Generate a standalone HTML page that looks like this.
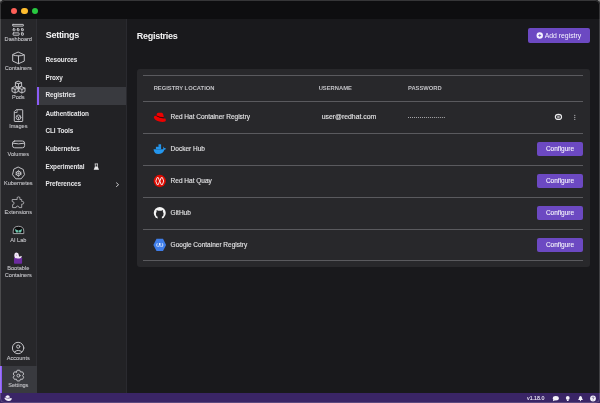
<!DOCTYPE html>
<html><head><meta charset="utf-8">
<style>
*{margin:0;padding:0;box-sizing:border-box}
html,body{width:600px;height:403px;overflow:hidden;background:#8c8c8c}
body{font-family:"Liberation Sans",sans-serif;position:relative;will-change:transform}
.win{position:absolute;left:0;top:0;width:600px;height:403px;border-radius:4.5px;background:#1a1a1d;overflow:hidden}
.frame{position:absolute;left:0;top:0;width:600px;height:403px;border-radius:4.5px;border:1px solid rgba(255,255,255,0.17);pointer-events:none}
.abs{position:absolute}
.title{left:0;top:0;width:600px;height:18.6px;background:#0e0e10}
.dot{position:absolute;width:6.4px;height:6.4px;border-radius:50%;top:7.7px}
.nav{left:0;top:18.6px;width:37px;height:375px;background:#27272a;border-right:1px solid #2f2f34}
.snav{left:37px;top:18.6px;width:90px;height:375px;background:#222225;border-right:1px solid #2a2a2f}
.main{left:127px;top:18.6px;width:472px;height:375px;background:#19191c}
.status{left:0;top:393.3px;width:600px;height:9.7px;background:#3a2566}
.lbl{position:absolute;left:0;width:36.6px;text-align:center;font-size:5.6px;color:#c4c4c8;-webkit-text-stroke:0.1px #c4c4c8;white-space:nowrap;line-height:1}
.ic{position:absolute}
.mi{position:absolute;left:45.5px;font-size:6.4px;font-weight:bold;color:#e6e6e8;white-space:nowrap;line-height:1;letter-spacing:-0.1px}
.card{left:137px;top:69px;width:452.5px;height:198px;background:#28282b;border-radius:3px}
.hl{position:absolute;left:6px;width:440px;height:1px;background:#5a5a5e}
.th{position:absolute;font-size:5.8px;font-weight:bold;color:#c2c2c6;line-height:1;white-space:nowrap}
.td{position:absolute;font-size:6.5px;color:#e4e4e6;line-height:1;white-space:nowrap;-webkit-text-stroke:0.12px #e4e4e6}
.btn{position:absolute;left:400px;width:46px;height:14.4px;background:#6c49c2;border-radius:2px;color:#f2f0fa;font-size:6.5px;text-align:center;line-height:14.4px;-webkit-text-stroke:0.12px #f2f0fa}
</style></head><body>
<div class="win">
  <div class="abs title">
    <div class="dot" style="left:10.8px;background:#fe5f57"></div>
    <div class="dot" style="left:21.3px;background:#febc2e"></div>
    <div class="dot" style="left:31.8px;background:#28c840"></div>
  </div>
  <div class="abs nav"></div>
  <div class="abs snav"></div>
  <div class="abs main"></div>
</div>
<!-- NAV LABELS -->
<div class="lbl" style="top:37px">Dashboard</div>
<div class="lbl" style="top:66px">Containers</div>
<div class="lbl" style="top:94.7px">Pods</div>
<div class="lbl" style="top:123.7px">Images</div>
<div class="lbl" style="top:152.4px">Volumes</div>
<div class="lbl" style="top:181.4px">Kubernetes</div>
<div class="lbl" style="top:209.8px">Extensions</div>
<div class="lbl" style="top:237.5px">AI Lab</div>
<div class="lbl" style="top:265.8px">Bootable</div>
<div class="lbl" style="top:273.3px">Containers</div>
<div class="lbl" style="top:355.6px">Accounts</div>
<div class="abs" style="left:0;top:365.8px;width:37px;height:27.5px;background:#393a3f"></div>
<div class="abs" style="left:0;top:365.8px;width:2px;height:27.8px;background:#8b5cf6"></div>
<div class="lbl" style="top:382.8px">Settings</div>

<!-- SETTINGS NAV -->
<div class="abs" style="left:45.8px;top:30.8px;font-size:9px;font-weight:bold;color:#f4f4f5;letter-spacing:-0.3px;line-height:1">Settings</div>
<div class="abs" style="left:37px;top:87px;width:89px;height:18px;background:#393a3f"></div>
<div class="abs" style="left:37px;top:87px;width:2px;height:18px;background:#8b5cf6"></div>
<div class="mi" style="top:57px">Resources</div>
<div class="mi" style="top:74.7px">Proxy</div>
<div class="mi" style="top:92.2px">Registries</div>
<div class="mi" style="top:110.5px">Authentication</div>
<div class="mi" style="top:128.2px">CLI Tools</div>
<div class="mi" style="top:145.9px">Kubernetes</div>
<div class="mi" style="top:163.5px">Experimental</div>
<div class="mi" style="top:181.4px">Preferences</div>

<!-- MAIN -->
<div class="abs" style="left:136.8px;top:31.5px;font-size:9px;font-weight:bold;color:#f4f4f5;letter-spacing:-0.28px;line-height:1">Registries</div>
<div class="abs" style="left:528px;top:28px;width:61.6px;height:15px;background:#6c49c2;border-radius:2px"></div>
<div class="abs" style="left:544.7px;top:32.6px;font-size:6.85px;color:#f5f3ff;line-height:1;white-space:nowrap">Add registry</div>

<div class="abs card">
  <div class="hl" style="top:5.6px"></div>
  <div class="hl" style="top:32px"></div>
  <div class="hl" style="top:63.9px"></div>
  <div class="hl" style="top:95.8px"></div>
  <div class="hl" style="top:127.6px"></div>
  <div class="hl" style="top:159.5px"></div>
  <div class="hl" style="top:191.3px"></div>
  <div class="th" style="left:16.7px;top:16.6px">REGISTRY LOCATION</div>
  <div class="th" style="left:181.7px;top:16.6px">USERNAME</div>
  <div class="th" style="left:271px;top:16.6px">PASSWORD</div>

  <div class="td" style="left:33.6px;top:45.4px">Red Hat Container Registry</div>
  <div class="td" style="left:184.7px;top:45.4px;font-size:6.85px">user@redhat.com</div>
  <div class="td" style="left:33.6px;top:77.4px">Docker Hub</div>
  <div class="td" style="left:33.6px;top:109.2px">Red Hat Quay</div>
  <div class="td" style="left:33.6px;top:141.0px">GitHub</div>
  <div class="td" style="left:33.6px;top:172.9px">Google Container Registry</div>

  <div class="btn" style="top:72.9px">Configure</div>
  <div class="btn" style="top:104.7px">Configure</div>
  <div class="btn" style="top:136.6px">Configure</div>
  <div class="btn" style="top:168.5px">Configure</div>
</div>

<div class="abs status"></div>
<div class="abs" style="left:527px;top:395.5px;font-size:5.3px;color:#eeeaf8;line-height:1;-webkit-text-stroke:0.1px #eeeaf8">v1.18.0</div>

<svg class="abs" style="left:0;top:0" width="600" height="403" viewBox="0 0 600 403">
<g fill="none" stroke="#c2c2c6" stroke-width="1" stroke-linejoin="round" stroke-linecap="round">
  <!-- dashboard -->
  <g stroke-width="0.95" stroke="#c8c8cc">
  <rect x="12.7" y="24.4" width="10.7" height="1.7" rx="0.3"/>
  <rect x="13.1" y="28.8" width="1.9" height="1.9" rx="0.3"/>
  <rect x="17.2" y="28.8" width="1.9" height="1.9" rx="0.3"/>
  <rect x="21.5" y="28.8" width="1.9" height="1.9" rx="0.3"/>
  <rect x="13.1" y="32.9" width="6" height="2.3" rx="0.3"/>
  <rect x="21.5" y="32.9" width="1.9" height="2.3" rx="0.3"/>
  </g>
  <!-- containers -->
  <path d="M18.5 52.2 L24.3 54.9 L24.3 61.1 L18.5 63.7 L12.7 61.1 L12.7 54.9 Z M12.9 54.9 Q15 55.8 18.5 55.9 Q22 55.8 24.1 54.9 M18.5 55.9 L18.5 63.5"/>
  <!-- pods -->
  <path d="M18.5 81.3 L21.6 82.7 L21.6 86 L18.5 87.4 L15.4 86 L15.4 82.7 Z M15.4 82.7 L18.5 83.8 L21.6 82.7 M18.5 83.8 L18.5 87.4"/>
  <path d="M15.1 86.8 L18.2 88.2 L18.2 91.5 L15.1 92.9 L12 91.5 L12 88.2 Z M12 88.2 L15.1 89.3 L18.2 88.2 M15.1 89.3 L15.1 92.9"/>
  <path d="M21.9 86.8 L25 88.2 L25 91.5 L21.9 92.9 L18.8 91.5 L18.8 88.2 Z M18.8 88.2 L21.9 89.3 L25 88.2 M21.9 89.3 L21.9 92.9"/>
  <!-- images -->
  <path d="M16.6 109.7 L22.3 109.7 Q22.7 109.7 22.7 110.1 L22.7 121.1 Q22.7 121.5 22.3 121.5 L14.7 121.5 Q14.3 121.5 14.3 121.1 L14.3 112 Z"/>
  <path d="M14.9 112.5 L17.1 112.5 L17.1 110.3" stroke-width="0.8"/>
  <circle cx="18.5" cy="117.4" r="2.4" stroke-width="0.9"/>
  <path d="M16.8 116.3 L18.5 117.4 L20.2 116.3 M18.5 117.4 L18.5 119.6" stroke-width="0.8"/>
  <!-- volumes -->
  <rect x="12.5" y="141" width="12.1" height="6.8" rx="2.2"/>
  <path d="M12.6 143.2 Q18.5 144.6 24.5 143.2"/>
  <!-- kubernetes -->
  <path d="M18.5 167.2 L23.3 169.5 L24.5 174.7 L21.2 178.8 L15.8 178.8 L12.5 174.7 L13.7 169.5 Z"/>
  <circle cx="18.5" cy="173.4" r="2.3"/>
  <path d="M18.5 170.2 L18.5 176.6 M15.6 172.2 L21.4 174.6 M21.4 172.2 L15.6 174.6" stroke-width="0.6"/>
  <!-- extensions -->
  <path stroke-width="0.7" stroke="#d4d4d8" d="M12.6 199.5 L17.2 199.5 L17.2 198.9 A1.45 1.45 0 1 1 19.9 198.9 L19.9 199.5 L21.7 199.5 L21.7 201.5 L22.5 201.5 A1.3 1.3 0 1 1 22.5 204.1 L21.7 204.1 L21.7 207.6 L19.1 207.6 A1.5 1.5 0 0 0 16.1 207.6 L12.6 207.6 L12.6 204.6 A1.5 1.5 0 0 0 12.6 201.6 Z"/>
  <!-- ai lab -->
  <path d="M13.2 233.2 L13.2 231.2 Q13.2 226.3 18.5 226.3 Q23.8 226.3 23.8 231.2 L23.8 233.2 Z" fill="#0b0b0c" stroke="#a8a8ac" stroke-width="0.95"/>
  <!-- accounts -->
  <circle cx="18.1" cy="348" r="5.7"/>
  <circle cx="18.2" cy="346.6" r="1.6"/>
  <path d="M14.6 351.9 Q18.2 348.6 21.8 351.9"/>
  <!-- settings gear -->
  <path d="M16.40 372.05 L17.21 370.24 L19.69 370.24 L20.50 372.05 L20.50 372.05 L22.47 371.85 L23.71 373.99 L22.55 375.60 L22.55 375.60 L23.71 377.21 L22.47 379.35 L20.50 379.15 L20.50 379.15 L19.69 380.96 L17.21 380.96 L16.40 379.15 L16.40 379.15 L14.43 379.35 L13.19 377.21 L14.35 375.60 L14.35 375.60 L13.19 373.99 L14.43 371.85 L16.40 372.05 Z"/>
  <circle cx="18.45" cy="375.6" r="1.5"/>
</g>
<!-- ai lab eyes -->
<path d="M14.7 228.9 L18.3 230.4 L18.3 232.4 L16 232.4 Z M22.3 228.9 L18.7 230.4 L18.7 232.4 L21 232.4 Z" fill="#6cc4ac"/>
<!-- bootable -->
<rect x="14" y="257.6" width="8.1" height="6.1" rx="0.7" fill="#6c2b9f"/>
<path d="M16.5 252.5 Q18.7 252.5 18.8 255 Q18.8 256.3 19.4 256.6 Q20.3 256.8 20.9 255.7 L21.9 256.4 Q21.3 258.4 19.3 258.6 Q17.6 258.7 16.6 258.3 Q14.3 258.2 14.3 255.4 Q14.3 252.5 16.5 252.5 Z" fill="#f0e6f6"/>
<circle cx="16.3" cy="255.1" r="0.45" fill="#6c2b9f"/>

<!-- flask -->
<path d="M94.7 163.9 L98 163.9 M95.3 163.9 L95.3 166.8 M97.4 163.9 L97.4 166.8" fill="none" stroke="#e8e8ea" stroke-width="0.75"/>
<path d="M95 166.4 L97.7 166.4 L99 169.8 L93.7 169.8 Z" fill="#ececee"/>
<!-- chevron -->
<path d="M116.2 182.6 L118.6 184.7 L116.2 186.8" fill="none" stroke="#d8d8da" stroke-width="0.9"/>

<!-- add circle -->
<circle cx="539.75" cy="35.5" r="3.2" fill="#f5f3ff"/>
<path d="M538.3 35.5 L541.2 35.5 M539.75 34.05 L539.75 36.95" stroke="#6c49c2" stroke-width="0.8"/>

<!-- red hat -->
<path d="M156.6 115.8 Q156.4 112.9 158.6 112.8 L161.8 112.8 Q163.4 113 163.6 116 L163.9 117.6 Q160 117.9 156.6 115.8 Z" fill="#ee0000"/>
<path d="M156.6 115.8 Q154 115.7 153.8 117.2 Q154.2 119.9 159.3 121.6 Q162.8 122.5 165.2 121.6 Q166.6 120.4 165.4 118.4 Q163 118.8 159.5 117.6 Z" fill="#ee0000"/>
<path d="M156.5 115.9 Q160 117.8 163.9 117.7" fill="none" stroke="#1a0505" stroke-width="0.7"/>
<!-- docker -->
<path d="M153.5 149.2 L163.2 149.2 Q163.8 147.6 164.4 148 Q165.6 148.2 166 148.8 Q165.4 149.6 164.4 149.8 Q162.8 154.2 158.2 154.1 Q154.2 154.1 153.5 149.2 Z" fill="#2496ed"/>
<rect x="155.9" y="146.8" width="5.2" height="2.3" fill="#2496ed"/>
<rect x="158.5" y="144.3" width="2.6" height="2.6" fill="#2496ed"/>
<path d="M163.3 149 Q163 147.5 163.6 146.4 Q164.2 147.3 164.2 148.6 Z" fill="#2496ed"/>
<!-- quay -->
<circle cx="159.75" cy="181" r="6.15" fill="#e00a00"/>
<path d="M157.1 177.6 L158.3 177.6 L159.6 181.1 L158.3 184.6 L157.1 184.6 L155.8 181.1 Z M161.2 177.6 L162.4 177.6 L163.7 181.1 L162.4 184.6 L161.2 184.6 L159.9 181.1 Z" fill="none" stroke="#f2f2f2" stroke-width="0.95" stroke-linejoin="round"/>
<!-- github -->
<circle cx="159.75" cy="213" r="6" fill="#f5f5f5"/>
<path d="M157.6 218.9 L157.6 216.8 Q155.8 216.4 155.9 213.6 Q156 212.4 156.6 211.9 L156.6 210 L158.2 210.8 Q159.75 210.5 161.3 210.8 L162.9 210 L162.9 211.9 Q163.5 212.4 163.6 213.6 Q163.7 216.4 161.9 216.8 L161.9 218.9 Z" fill="#27272a"/>
<!-- google -->
<path d="M156.5 238.8 L163 238.8 L166.1 245 L163 251.1 L156.5 251.1 L153.4 245 Z" fill="#3f7de8"/>
<path d="M157.3 243.2 L156.6 245 L157.3 246.8 M162.2 243.2 L162.9 245 L162.2 246.8" fill="none" stroke="#fff" stroke-width="0.7"/>
<circle cx="159.75" cy="244" r="0.9" fill="#fff"/>
<path d="M157.9 246.4 Q159.75 245.1 161.6 246.4" fill="none" stroke="#fff" stroke-width="0.8"/>

<!-- eye -->
<ellipse cx="558.45" cy="116.9" rx="3.1" ry="2.5" fill="none" stroke="#ececee" stroke-width="1.15"/>
<circle cx="558.45" cy="116.9" r="1.35" fill="#a8a8ac"/>
<!-- kebab -->
<circle cx="574.8" cy="115.3" r="0.6" fill="#c4c4c8"/>
<circle cx="574.8" cy="117.3" r="0.6" fill="#c4c4c8"/>
<circle cx="574.8" cy="119.3" r="0.6" fill="#c4c4c8"/>
<!-- password dots -->
<g fill="#d0d0d4"><circle cx="408.50" cy="117.4" r="0.5"/><circle cx="410.49" cy="117.4" r="0.5"/><circle cx="412.48" cy="117.4" r="0.5"/><circle cx="414.47" cy="117.4" r="0.5"/><circle cx="416.46" cy="117.4" r="0.5"/><circle cx="418.44" cy="117.4" r="0.5"/><circle cx="420.43" cy="117.4" r="0.5"/><circle cx="422.42" cy="117.4" r="0.5"/><circle cx="424.41" cy="117.4" r="0.5"/><circle cx="426.40" cy="117.4" r="0.5"/><circle cx="428.39" cy="117.4" r="0.5"/><circle cx="430.38" cy="117.4" r="0.5"/><circle cx="432.37" cy="117.4" r="0.5"/><circle cx="434.36" cy="117.4" r="0.5"/><circle cx="436.34" cy="117.4" r="0.5"/><circle cx="438.33" cy="117.4" r="0.5"/><circle cx="440.32" cy="117.4" r="0.5"/><circle cx="442.31" cy="117.4" r="0.5"/><circle cx="444.30" cy="117.4" r="0.5"/></g>

<!-- status hat -->
<path d="M5.2 397.6 Q5.4 395.4 7.6 395.3 Q9.6 395.4 10 397.5 Q8 398.2 5.2 397.6 Z M4.3 397.8 Q8 399.2 11.6 398.1 Q12.2 400.8 8.8 401.1 Q5 400.6 4.3 397.8 Z" fill="#f2f0f8"/>
<!-- chat -->
<ellipse cx="555.8" cy="398.3" rx="3" ry="2.2" fill="#f4f2fa"/>
<path d="M553.3 399.5 L552.9 401.2 L555 400.3 Z" fill="#f4f2fa"/>
<!-- bulb -->
<circle cx="567.75" cy="397.9" r="1.9" fill="#f4f2fa"/>
<rect x="566.9" y="399.6" width="1.7" height="1.4" fill="#f4f2fa"/>
<!-- bell -->
<path d="M578 400 Q579 399.4 579 397.8 Q579.2 396 580.5 396 Q581.8 396 582 397.8 Q582 399.4 583 400 Z" fill="#f4f2fa"/>
<circle cx="580.5" cy="400.6" r="0.6" fill="#f4f2fa"/>
<!-- help -->
<circle cx="593" cy="398.5" r="2.9" fill="#f4f2fa"/>
<path d="M592.1 397.8 Q592.2 396.9 593 396.9 Q593.9 396.9 593.9 397.7 Q593.9 398.3 593 398.7 L593 399.2" fill="none" stroke="#3b2764" stroke-width="0.6"/>
<circle cx="593" cy="400.1" r="0.35" fill="#3b2764"/>
</svg>
<div class="frame"></div>
</body></html>
